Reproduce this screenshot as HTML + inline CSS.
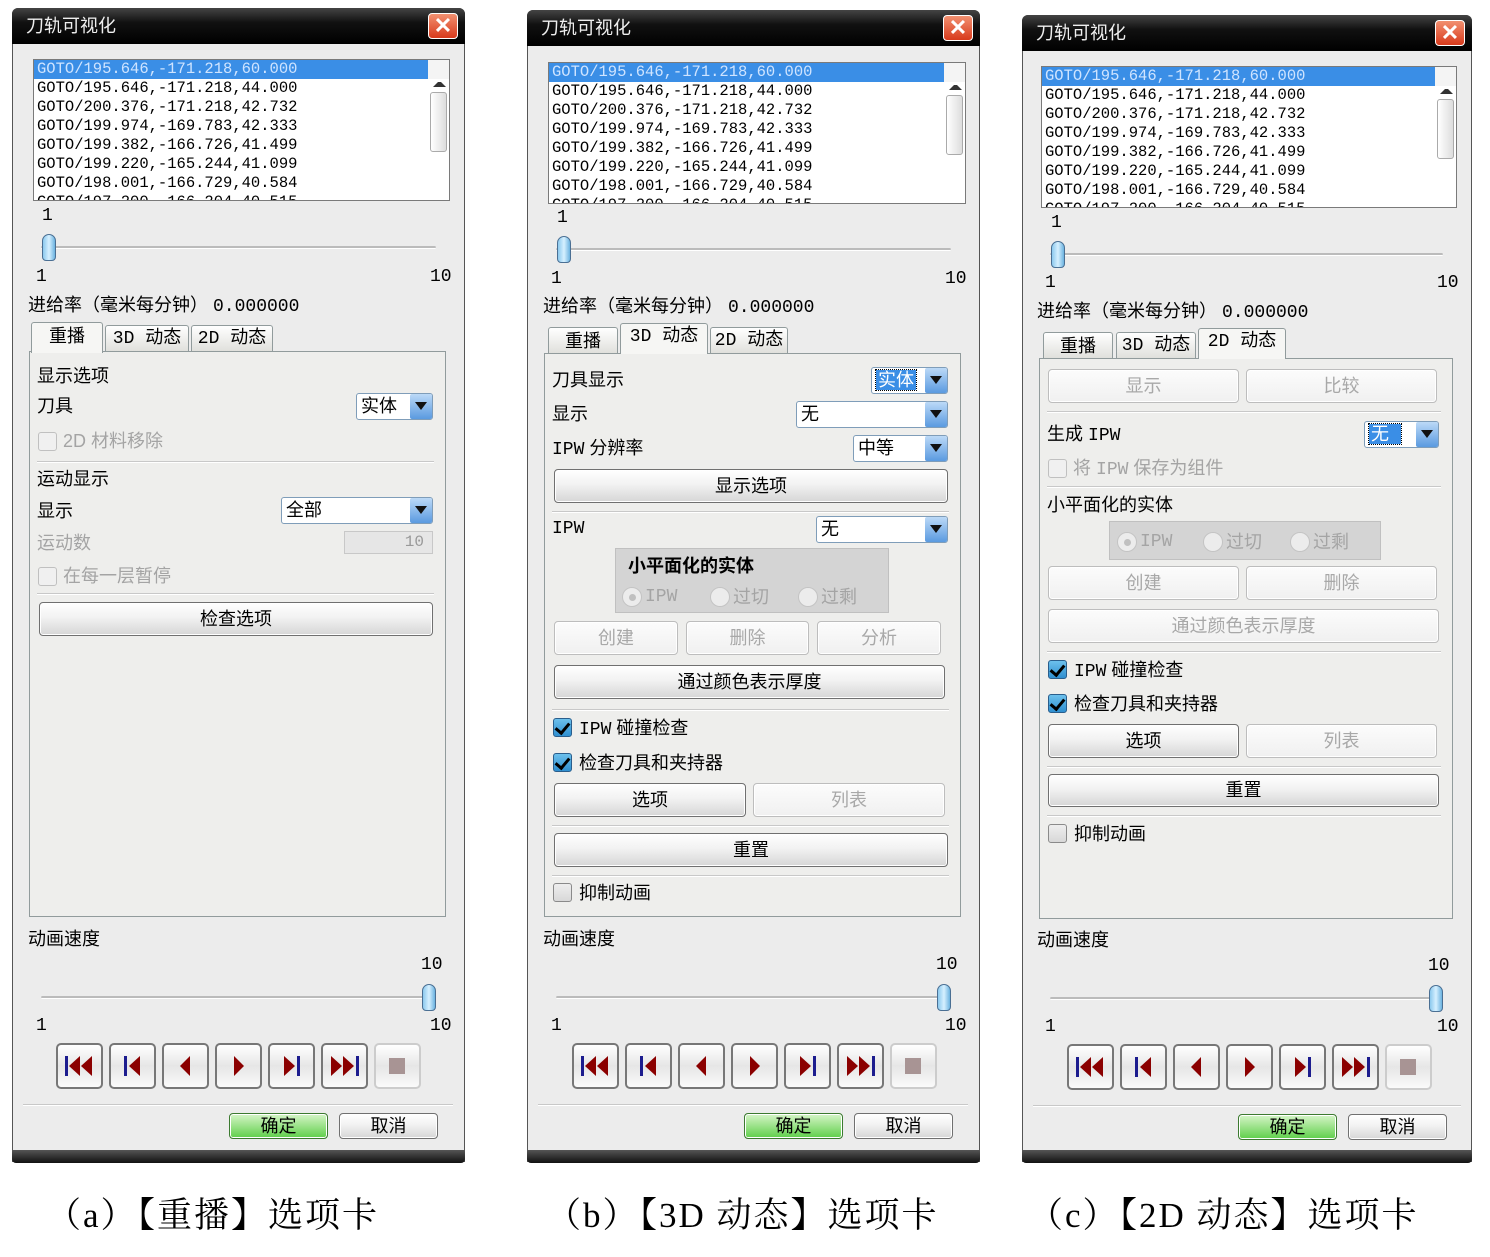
<!DOCTYPE html>
<html><head><meta charset="utf-8">
<style>
*{margin:0;padding:0;box-sizing:border-box}
body{width:1490px;height:1257px;background:#fff;position:relative;overflow:hidden;font-family:"Liberation Sans","Noto Sans CJK SC",sans-serif}
.p{position:absolute;background:#ececec;border:1px solid #555;border-radius:6px 6px 0 0}
.p>*{position:absolute}
.tb{left:-1px;top:-1px;right:-1px;height:36px;background:linear-gradient(#444,#111 40%,#000);border-radius:6px 6px 0 0;color:#eee;font-size:18px;line-height:36px;padding-left:14px}
.x{width:30px;height:26px;top:4px;right:6px;background:linear-gradient(#f29070,#d83a1c);border:1px solid #fff;border-radius:4px;color:#fff;font-size:22px;line-height:23px;text-align:center;font-weight:bold}
.bb{left:-1px;right:-1px;height:13px;background:linear-gradient(#555,#111);border-radius:0 0 4px 4px}
.t{font-size:18px;line-height:20px;white-space:nowrap;color:#000}
.g{color:#a4a4a4}
.m{font-family:"Liberation Mono","Noto Sans CJK SC",monospace}
.lst{background:#fff;border:1px solid #7a7a7a;overflow:hidden}
.lst div{font:15.5px/19px "Liberation Mono",monospace;padding-left:3px;white-space:nowrap;height:19px}
.lst .s{background:#3a8ee6;color:#cfe4ff;margin-right:21px}
.sb{position:absolute;right:0;top:0;width:21px;bottom:0;background:#f4f4f4}
.trk{height:3px;background:#bbb;border-bottom:1px solid #fff;border-radius:2px}
.th{width:14px;height:27px;background:linear-gradient(90deg,#8cc9ee,#d6f0ff,#6bb3e0);border:1px solid #4a6f93;border-radius:7px 7px 4px 4px}
.tabbox{border:1px solid #919b9c;background:#eeeeec}
.tab{border:1px solid #919b9c;border-bottom:none;background:linear-gradient(#fff,#e0e0dc);font-size:18px;line-height:26px;text-align:center;border-radius:3px 3px 0 0}
.tab.on{background:#f6f6f4;height:31px!important;z-index:2}
.btn{border:1px solid #707070;border-radius:4px;background:linear-gradient(#fff,#f2f2f2 45%,#d6d6d6);font-size:18px;text-align:center;box-shadow:inset 0 0 0 1px #fff}
.btn.d{border-color:#bdbdbd;color:#a8a8a8;background:linear-gradient(#fcfcfc,#f0f0f0)}
.dd{background:#fff;border:1px solid #7f9db9;border-radius:3px;font-size:18px;line-height:24px;padding-left:4px}
.dd i{position:absolute;right:0;top:0;bottom:0;width:22px;background:linear-gradient(#bcd9f7,#5a9ae0);border-radius:2px}
.dd i:after{content:"";position:absolute;left:5px;top:8px;border:6px solid transparent;border-top:8px solid #111;border-bottom:none}
.dd b{font-weight:normal;background:#3a8ee6;color:#fff;outline:1px dotted #000;padding:0 2px}
.cb{width:19px;height:19px;border:1px solid #8a8a8a;border-radius:3px;background:linear-gradient(#eee,#d8d8d8)}
.cb.d{border-color:#c0c0c0;background:#f0f0f0}
.cb.c{background:linear-gradient(#6cc0ec,#2f8fd0);border-color:#2a5e8c}
.cb.c:after{content:"";position:absolute;left:4px;top:1px;width:6px;height:11px;border:solid #000;border-width:0 3px 3px 0;transform:rotate(40deg)}
.sep{height:2px;border-top:1px solid #c8c8c8;border-bottom:1px solid #fff}
.grp{background:#d4d4d4;border:1px solid #c0c0c0}
.rd{width:20px;height:20px;border-radius:50%;border:1px solid #c4c4c4;background:#ececec}
.rd.on:after{content:"";position:absolute;left:6px;top:6px;width:7px;height:7px;border-radius:50%;background:#c0c0c0}
.mb{width:47px;height:46px;border:2px solid #777;border-radius:5px;background:linear-gradient(#fff,#e6e6e6 50%,#fafafa)}
.mb.d{border-color:#ccc}
.ok{background:linear-gradient(#d6f5c8,#5fcf4a);border-color:#3c7a30}
.cap{position:absolute;top:1194px;font:35px/44px "Liberation Serif","Noto Serif CJK SC",serif;white-space:nowrap;letter-spacing:2px}
</style></head><body>
<svg width="0" height="0" style="position:absolute">
<defs>
<symbol id="m1" viewBox="0 0 43 42"><rect x="7" y="11" width="3" height="20" fill="#1c1c8e"/><polygon points="22,11 11,21 22,31" fill="#8b0000"/><polygon points="34,11 23,21 34,31" fill="#8b0000"/></symbol>
<symbol id="m2" viewBox="0 0 43 42"><rect x="13" y="11" width="3" height="20" fill="#1c1c8e"/><polygon points="29,11 18,21 29,31" fill="#8b0000"/></symbol>
<symbol id="m3" viewBox="0 0 43 42"><polygon points="26,11 16,21 26,31" fill="#8b0000"/></symbol>
<symbol id="m4" viewBox="0 0 43 42"><polygon points="17,11 27,21 17,31" fill="#8b0000"/></symbol>
<symbol id="m5" viewBox="0 0 43 42"><polygon points="14,11 25,21 14,31" fill="#8b0000"/><rect x="27" y="11" width="3" height="20" fill="#1c1c8e"/></symbol>
<symbol id="m6" viewBox="0 0 43 42"><polygon points="8,11 19,21 8,31" fill="#8b0000"/><polygon points="20,11 31,21 20,31" fill="#8b0000"/><rect x="33" y="11" width="3" height="20" fill="#1c1c8e"/></symbol>
<symbol id="m7" viewBox="0 0 43 42"><rect x="13" y="13" width="16" height="16" fill="#a89494"/></symbol>
</defs></svg>

<!-- ================= PANEL A ================= -->
<div class="p" style="left:12px;top:8px;width:453px;height:1154px">
<div class="tb">刀轨可视化</div><div class="x">✕</div>
<div class="lst" style="left:20px;top:50px;width:417px;height:142px">
<div class="s">GOTO/195.646,-171.218,60.000</div><div>GOTO/195.646,-171.218,44.000</div><div>GOTO/200.376,-171.218,42.732</div><div>GOTO/199.974,-169.783,42.333</div><div>GOTO/199.382,-166.726,41.499</div><div>GOTO/199.220,-165.244,41.099</div><div>GOTO/198.001,-166.729,40.584</div><div>GOTO/197.200,-166.204,40.515</div>
<div class="sb"><div style="position:absolute;left:2px;top:32px;width:17px;height:60px;border:1px solid #aaa;border-radius:3px;background:linear-gradient(90deg,#fff,#ddd)"></div><div style="position:absolute;left:5px;top:8px;border:5px solid transparent;border-bottom:5px solid #333;border-top:none"></div><div style="position:absolute;left:5px;bottom:10px;border:5px solid transparent;border-top:5px solid #333;border-bottom:none"></div></div>
</div>
<div class="t m" style="left:29px;top:197px">1</div>
<div class="trk" style="left:28px;top:237px;width:395px"></div>
<div class="th" style="left:29px;top:225px"></div>
<div class="t m" style="left:23px;top:258px">1</div><div class="t m" style="left:417px;top:258px">10</div>
<div class="t" style="left:15px;top:286px">进给率（毫米每分钟） <span class="m">0.000000</span></div>
<div class="tabbox" style="left:16px;top:342px;width:417px;height:566px"></div>
<div class="tab on" style="left:18px;top:313px;width:72px;height:29px">重播</div>
<div class="tab m" style="left:92px;top:316px;width:84px;height:26px">3D 动态</div>
<div class="tab m" style="left:178px;top:316px;width:82px;height:26px">2D 动态</div>
<div class="t" style="left:24px;top:357px">显示选项</div>
<div class="t" style="left:24px;top:387px">刀具</div>
<div class="dd" style="left:343px;top:384px;width:77px;height:27px">实体<i></i></div>
<div class="cb d" style="left:25px;top:423px"></div><div class="t g" style="left:50px;top:422px">2D 材料移除</div>
<div class="sep" style="left:24px;top:452px;width:397px"></div>
<div class="t" style="left:24px;top:460px">运动显示</div>
<div class="t" style="left:24px;top:492px">显示</div>
<div class="dd" style="left:268px;top:488px;width:152px;height:27px">全部<i></i></div>
<div class="t g" style="left:24px;top:524px">运动数</div>
<div style="left:331px;top:522px;width:89px;height:23px;border:1px solid #c8c8c8;background:#e6e6e6;color:#999;font:16px/21px 'Liberation Mono',monospace;text-align:right;padding-right:8px">10</div>
<div class="cb d" style="left:25px;top:558px"></div><div class="t g" style="left:50px;top:557px">在每一层暂停</div>
<div class="sep" style="left:24px;top:584px;width:397px"></div>
<div class="btn" style="left:26px;top:593px;width:394px;height:34px;line-height:32px">检查选项</div>
<div class="t" style="left:15px;top:920px">动画速度</div>
<div class="t m" style="left:408px;top:946px">10</div>
<div class="trk" style="left:28px;top:987px;width:395px"></div>
<div class="th" style="left:409px;top:975px"></div>
<div class="t m" style="left:23px;top:1007px">1</div><div class="t m" style="left:417px;top:1007px">10</div>
<div class="mb" style="left:43px;top:1034px"><svg width="43" height="42"><use href="#m1"/></svg></div>
<div class="mb" style="left:96px;top:1034px"><svg width="43" height="42"><use href="#m2"/></svg></div>
<div class="mb" style="left:149px;top:1034px"><svg width="43" height="42"><use href="#m3"/></svg></div>
<div class="mb" style="left:202px;top:1034px"><svg width="43" height="42"><use href="#m4"/></svg></div>
<div class="mb" style="left:255px;top:1034px"><svg width="43" height="42"><use href="#m5"/></svg></div>
<div class="mb" style="left:308px;top:1034px"><svg width="43" height="42"><use href="#m6"/></svg></div>
<div class="mb d" style="left:361px;top:1034px"><svg width="43" height="42"><use href="#m7"/></svg></div>
<div class="sep" style="left:10px;top:1095px;width:430px"></div>
<div class="btn ok" style="left:216px;top:1104px;width:99px;height:26px;line-height:24px">确定</div>
<div class="btn" style="left:326px;top:1104px;width:99px;height:26px;line-height:24px">取消</div>
<div class="bb" style="top:1141px"></div>
</div>

<!-- ================= PANEL B ================= -->
<div class="p" style="left:527px;top:10px;width:453px;height:1152px">
<div class="tb">刀轨可视化</div><div class="x">✕</div>
<div class="lst" style="left:20px;top:51px;width:418px;height:142px">
<div class="s">GOTO/195.646,-171.218,60.000</div><div>GOTO/195.646,-171.218,44.000</div><div>GOTO/200.376,-171.218,42.732</div><div>GOTO/199.974,-169.783,42.333</div><div>GOTO/199.382,-166.726,41.499</div><div>GOTO/199.220,-165.244,41.099</div><div>GOTO/198.001,-166.729,40.584</div><div>GOTO/197.200,-166.204,40.515</div>
<div class="sb"><div style="position:absolute;left:2px;top:32px;width:17px;height:60px;border:1px solid #aaa;border-radius:3px;background:linear-gradient(90deg,#fff,#ddd)"></div><div style="position:absolute;left:5px;top:8px;border:5px solid transparent;border-bottom:5px solid #333;border-top:none"></div><div style="position:absolute;left:5px;bottom:10px;border:5px solid transparent;border-top:5px solid #333;border-bottom:none"></div></div>
</div>
<div class="t m" style="left:29px;top:197px">1</div>
<div class="trk" style="left:28px;top:237px;width:395px"></div>
<div class="th" style="left:29px;top:225px"></div>
<div class="t m" style="left:23px;top:258px">1</div><div class="t m" style="left:417px;top:258px">10</div>
<div class="t" style="left:15px;top:285px">进给率（毫米每分钟） <span class="m">0.000000</span></div>
<div class="tabbox" style="left:16px;top:342px;width:417px;height:564px"></div>
<div class="tab" style="left:20px;top:316px;width:70px;height:26px">重播</div>
<div class="tab on m" style="left:92px;top:312px;width:88px;height:30px">3D 动态</div>
<div class="tab m" style="left:182px;top:316px;width:78px;height:26px">2D 动态</div>
<div class="t" style="left:24px;top:359px">刀具显示</div>
<div class="dd" style="left:343px;top:356px;width:77px;height:27px"><b>实体</b><i></i></div>
<div class="t" style="left:24px;top:393px">显示</div>
<div class="dd" style="left:268px;top:390px;width:152px;height:27px">无<i></i></div>
<div class="t" style="left:24px;top:427px"><span class="m">IPW</span> 分辨率</div>
<div class="dd" style="left:325px;top:424px;width:95px;height:27px">中等<i></i></div>
<div class="btn" style="left:26px;top:458px;width:394px;height:34px;line-height:32px">显示选项</div>
<div class="sep" style="left:24px;top:500px;width:397px"></div>
<div class="t m" style="left:24px;top:508px">IPW</div>
<div class="dd" style="left:288px;top:505px;width:132px;height:27px">无<i></i></div>
<div class="grp" style="left:87px;top:537px;width:274px;height:65px"></div>
<div class="t" style="left:100px;top:545px;font-weight:bold">小平面化的实体</div>
<div class="rd on" style="left:94px;top:576px"></div><div class="t g m" style="left:117px;top:576px">IPW</div>
<div class="rd" style="left:182px;top:576px"></div><div class="t g" style="left:205px;top:576px">过切</div>
<div class="rd" style="left:270px;top:576px"></div><div class="t g" style="left:293px;top:576px">过剩</div>
<div class="btn d" style="left:26px;top:610px;width:124px;height:34px;line-height:32px">创建</div>
<div class="btn d" style="left:158px;top:610px;width:123px;height:34px;line-height:32px">删除</div>
<div class="btn d" style="left:289px;top:610px;width:124px;height:34px;line-height:32px">分析</div>
<div class="btn" style="left:26px;top:654px;width:391px;height:34px;line-height:32px">通过颜色表示厚度</div>
<div class="sep" style="left:24px;top:698px;width:397px"></div>
<div class="cb c" style="left:25px;top:707px"></div><div class="t" style="left:51px;top:707px"><span class="m">IPW</span> 碰撞检查</div>
<div class="cb c" style="left:25px;top:742px"></div><div class="t" style="left:51px;top:742px">检查刀具和夹持器</div>
<div class="btn" style="left:26px;top:772px;width:192px;height:34px;line-height:32px">选项</div>
<div class="btn d" style="left:225px;top:772px;width:192px;height:34px;line-height:32px">列表</div>
<div class="sep" style="left:24px;top:814px;width:397px"></div>
<div class="btn" style="left:26px;top:822px;width:394px;height:34px;line-height:32px">重置</div>
<div class="sep" style="left:24px;top:864px;width:397px"></div>
<div class="cb" style="left:25px;top:872px"></div><div class="t" style="left:51px;top:872px">抑制动画</div>
<div class="t" style="left:15px;top:918px">动画速度</div>
<div class="t m" style="left:408px;top:944px">10</div>
<div class="trk" style="left:28px;top:985px;width:395px"></div>
<div class="th" style="left:409px;top:973px"></div>
<div class="t m" style="left:23px;top:1005px">1</div><div class="t m" style="left:417px;top:1005px">10</div>
<div class="mb" style="left:44px;top:1032px"><svg width="43" height="42"><use href="#m1"/></svg></div>
<div class="mb" style="left:97px;top:1032px"><svg width="43" height="42"><use href="#m2"/></svg></div>
<div class="mb" style="left:150px;top:1032px"><svg width="43" height="42"><use href="#m3"/></svg></div>
<div class="mb" style="left:203px;top:1032px"><svg width="43" height="42"><use href="#m4"/></svg></div>
<div class="mb" style="left:256px;top:1032px"><svg width="43" height="42"><use href="#m5"/></svg></div>
<div class="mb" style="left:309px;top:1032px"><svg width="43" height="42"><use href="#m6"/></svg></div>
<div class="mb d" style="left:362px;top:1032px"><svg width="43" height="42"><use href="#m7"/></svg></div>
<div class="sep" style="left:10px;top:1093px;width:430px"></div>
<div class="btn ok" style="left:216px;top:1102px;width:99px;height:26px;line-height:24px">确定</div>
<div class="btn" style="left:326px;top:1102px;width:99px;height:26px;line-height:24px">取消</div>
<div class="bb" style="top:1139px"></div>
</div>

<!-- ================= PANEL C ================= -->
<div class="p" style="left:1022px;top:15px;width:450px;height:1147px">
<div class="tb">刀轨可视化</div><div class="x">✕</div>
<div class="lst" style="left:18px;top:50px;width:416px;height:142px">
<div class="s">GOTO/195.646,-171.218,60.000</div><div>GOTO/195.646,-171.218,44.000</div><div>GOTO/200.376,-171.218,42.732</div><div>GOTO/199.974,-169.783,42.333</div><div>GOTO/199.382,-166.726,41.499</div><div>GOTO/199.220,-165.244,41.099</div><div>GOTO/198.001,-166.729,40.584</div><div>GOTO/197.200,-166.204,40.515</div>
<div class="sb"><div style="position:absolute;left:2px;top:32px;width:17px;height:60px;border:1px solid #aaa;border-radius:3px;background:linear-gradient(90deg,#fff,#ddd)"></div><div style="position:absolute;left:5px;top:8px;border:5px solid transparent;border-bottom:5px solid #333;border-top:none"></div><div style="position:absolute;left:5px;bottom:10px;border:5px solid transparent;border-top:5px solid #333;border-bottom:none"></div></div>
</div>
<div class="t m" style="left:28px;top:197px">1</div>
<div class="trk" style="left:27px;top:237px;width:393px"></div>
<div class="th" style="left:28px;top:225px"></div>
<div class="t m" style="left:22px;top:257px">1</div><div class="t m" style="left:414px;top:257px">10</div>
<div class="t" style="left:14px;top:285px">进给率（毫米每分钟） <span class="m">0.000000</span></div>
<div class="tabbox" style="left:16px;top:342px;width:414px;height:561px"></div>
<div class="tab" style="left:20px;top:316px;width:70px;height:26px">重播</div>
<div class="tab m" style="left:93px;top:316px;width:80px;height:26px">3D 动态</div>
<div class="tab on m" style="left:175px;top:312px;width:88px;height:30px">2D 动态</div>
<div class="btn d" style="left:25px;top:353px;width:191px;height:34px;line-height:32px">显示</div>
<div class="btn d" style="left:223px;top:353px;width:191px;height:34px;line-height:32px">比较</div>
<div class="sep" style="left:24px;top:395px;width:394px"></div>
<div class="t" style="left:24px;top:408px">生成 <span class="m">IPW</span></div>
<div class="dd" style="left:341px;top:405px;width:75px;height:27px"><b>无&nbsp;&nbsp;</b><i></i></div>
<div class="cb d" style="left:25px;top:443px"></div><div class="t g" style="left:50px;top:442px">将 <span class="m">IPW</span> 保存为组件</div>
<div class="sep" style="left:24px;top:470px;width:394px"></div>
<div class="t" style="left:24px;top:479px">小平面化的实体</div>
<div class="grp" style="left:86px;top:505px;width:272px;height:39px"></div>
<div class="rd on" style="left:94px;top:516px"></div><div class="t g m" style="left:117px;top:516px">IPW</div>
<div class="rd" style="left:180px;top:516px"></div><div class="t g" style="left:203px;top:516px">过切</div>
<div class="rd" style="left:267px;top:516px"></div><div class="t g" style="left:290px;top:516px">过剩</div>
<div class="btn d" style="left:25px;top:550px;width:191px;height:34px;line-height:32px">创建</div>
<div class="btn d" style="left:223px;top:550px;width:191px;height:34px;line-height:32px">删除</div>
<div class="btn d" style="left:25px;top:593px;width:391px;height:34px;line-height:32px">通过颜色表示厚度</div>
<div class="sep" style="left:24px;top:635px;width:394px"></div>
<div class="cb c" style="left:25px;top:644px"></div><div class="t" style="left:51px;top:644px"><span class="m">IPW</span> 碰撞检查</div>
<div class="cb c" style="left:25px;top:678px"></div><div class="t" style="left:51px;top:678px">检查刀具和夹持器</div>
<div class="btn" style="left:25px;top:708px;width:191px;height:34px;line-height:32px">选项</div>
<div class="btn d" style="left:223px;top:708px;width:191px;height:34px;line-height:32px">列表</div>
<div class="sep" style="left:24px;top:750px;width:394px"></div>
<div class="btn" style="left:25px;top:758px;width:391px;height:33px;line-height:31px">重置</div>
<div class="sep" style="left:24px;top:799px;width:394px"></div>
<div class="cb" style="left:25px;top:808px"></div><div class="t" style="left:51px;top:808px">抑制动画</div>
<div class="t" style="left:14px;top:914px">动画速度</div>
<div class="t m" style="left:405px;top:940px">10</div>
<div class="trk" style="left:27px;top:981px;width:393px"></div>
<div class="th" style="left:406px;top:969px"></div>
<div class="t m" style="left:22px;top:1001px">1</div><div class="t m" style="left:414px;top:1001px">10</div>
<div class="mb" style="left:44px;top:1028px"><svg width="43" height="42"><use href="#m1"/></svg></div>
<div class="mb" style="left:97px;top:1028px"><svg width="43" height="42"><use href="#m2"/></svg></div>
<div class="mb" style="left:150px;top:1028px"><svg width="43" height="42"><use href="#m3"/></svg></div>
<div class="mb" style="left:203px;top:1028px"><svg width="43" height="42"><use href="#m4"/></svg></div>
<div class="mb" style="left:256px;top:1028px"><svg width="43" height="42"><use href="#m5"/></svg></div>
<div class="mb" style="left:309px;top:1028px"><svg width="43" height="42"><use href="#m6"/></svg></div>
<div class="mb d" style="left:362px;top:1028px"><svg width="43" height="42"><use href="#m7"/></svg></div>
<div class="sep" style="left:10px;top:1089px;width:428px"></div>
<div class="btn ok" style="left:215px;top:1098px;width:99px;height:26px;line-height:24px">确定</div>
<div class="btn" style="left:325px;top:1098px;width:99px;height:26px;line-height:24px">取消</div>
<div class="bb" style="top:1134px"></div>
</div>

<div class="cap" style="left:46px">（a）【重播】选项卡</div>
<div class="cap" style="left:546px">（b）【3D 动态】选项卡</div>
<div class="cap" style="left:1028px">（c）【2D 动态】选项卡</div>
</body></html>
